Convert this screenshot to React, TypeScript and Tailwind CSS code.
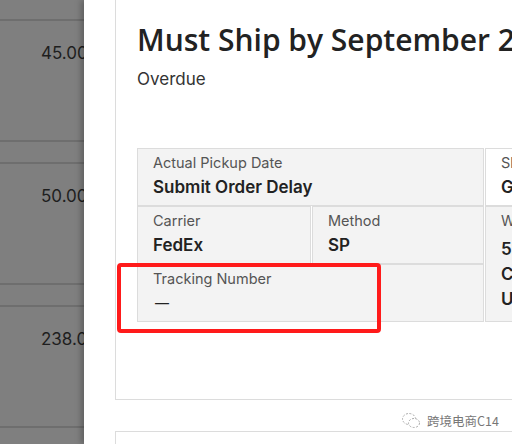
import React from "react";

const font = { fontFamily: "Inter, 'Open Sans', 'Noto Sans CJK SC', sans-serif" };

function Cell({ label, lines, className = "" }: { label: string; lines: string[]; className?: string }) {
  return (
    <div className={`border border-[#dcdcdc] px-[15px] pt-[4px] ${className}`}>
      <p className="text-[14.5px] leading-[20px] text-[#555]">{label}</p>
      {lines.map((l) => (
        <p key={l} className="text-[17px] leading-[28px] font-semibold text-[#222]">{l}</p>
      ))}
    </div>
  );
}

function BackdropRow({ value }: { value: string }) {
  return (
    <>
      <div className="h-[121px] border-t-[2px] border-[#6e6e6e] pl-[41px] pt-[20px]">
        <span className="text-[17px] leading-[24px] text-[#1e1e1e]">{value}</span>
      </div>
      <div className="h-[22px] border-t-[2px] border-[#6e6e6e]" />
    </>
  );
}

export default function App() {
  return (
    <div className="w-[512px] h-[444px] overflow-hidden flex bg-white relative" style={font}>
      <div className="w-[84px] shrink-0 bg-[#7f7f7f] overflow-hidden">
        <div className="w-[120px] whitespace-nowrap">
          <div className="h-[19px]" />
          <BackdropRow value="45.00" />
          <BackdropRow value="50.00" />
          <BackdropRow value="238.00" />
        </div>
      </div>
      <div className="flex-1 overflow-hidden bg-white shadow-[-3px_0_6px_rgba(0,0,0,0.25)] pl-[31px]">
        <div className="w-[520px] h-[400px] border border-[#dcdcdc] border-t-0 pl-[21px] relative">
          <h1
            className="pt-[20px] text-[30px] leading-[40px] font-semibold text-[#222] whitespace-nowrap"
            style={{ fontFamily: "'Open Sans', sans-serif" }}
          >
            Must Ship by September 22
          </h1>
          <p className="mt-[7px] text-[17px] leading-[24px] text-[#333]">Overdue</p>
          <div className="mt-[57px] grid grid-cols-[174px_172px_160px] grid-rows-[58px_58px_58px] gap-x-[1px]">
            <Cell label="Actual Pickup Date" lines={["Submit Order Delay"]} className="col-span-2 bg-[#f3f3f3]" />
            <Cell label="Ship From" lines={["GA Warehouse"]} className="bg-white" />
            <Cell label="Carrier" lines={["FedEx"]} className="bg-[#f3f3f3]" />
            <Cell label="Method" lines={["SP"]} className="bg-[#f3f3f3]" />
            <div className="row-span-2 border border-[#dcdcdc] bg-[#f3f3f3] px-[15px] pt-[4px] whitespace-nowrap">
              <p className="text-[14.5px] leading-[20px] text-[#555]">Warehouse</p>
              <div className="mt-[6px]">
                <p className="text-[17px] leading-[25px] font-semibold text-[#222]">5100 Commerce Pkwy</p>
                <p className="text-[17px] leading-[25px] font-semibold text-[#222]">Cumming, GA 30040</p>
                <p className="text-[17px] leading-[25px] font-semibold text-[#222]">US</p>
              </div>
            </div>
            <div className="col-span-2 border border-[#dcdcdc] bg-[#f3f3f3] px-[15px] pt-[4px]">
              <p className="text-[14.5px] leading-[20px] text-[#555]">Tracking Number</p>
              <p className="pl-[2px] text-[14px] leading-[28px] text-[#222]">—</p>
            </div>
          </div>
          <div className="absolute left-[1px] top-[263px] w-[264px] h-[70px] border-[4px] border-[#ff1a1a] rounded-[4px]" />
        </div>
        <div className="mt-[31px] w-[520px] h-[40px] border border-[#dcdcdc]" />
      </div>
      <div className="absolute left-[401px] top-[412px] flex items-center gap-[6px] text-[12.5px] text-[#777]">
        <svg width="20" height="18" viewBox="0 0 20 18" fill="none" stroke="#aaa" strokeWidth="1">
          <ellipse cx="8" cy="7" rx="6.5" ry="5.5" strokeDasharray="2 1.5" />
          <ellipse cx="13" cy="11" rx="5.5" ry="4.5" fill="white" strokeDasharray="2 1.5" />
        </svg>
        <span style={{ fontFamily: "'Noto Sans CJK SC', sans-serif" }}>跨境电商C14</span>
      </div>
    </div>
  );
}
